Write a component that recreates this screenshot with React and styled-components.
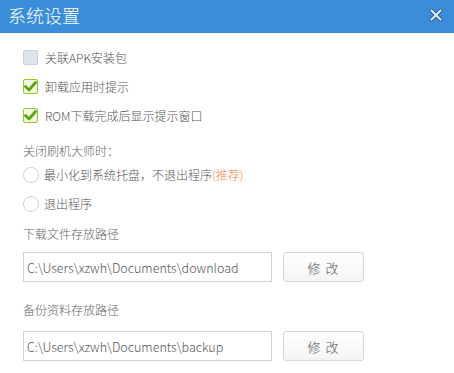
import React from "react";
import styled, { createGlobalStyle } from "styled-components";

const Global = createGlobalStyle`
  html, body { margin: 0; padding: 0; background: #fff; }
  body { font-family: "Noto Sans CJK SC", "Noto Sans", sans-serif; }
`;

const Window = styled.div`
  width: 454px;
  height: 373px;
  background: #fff;
  overflow: hidden;
`;

const TitleBar = styled.div`
  height: 33px;
  background: #3a8dd8;
  display: flex;
  align-items: center;
  justify-content: space-between;
  padding: 0 10px 0 8px;
  box-sizing: border-box;
`;

const Title = styled.div`
  color: #fff;
  font-size: 18px;
  font-weight: 300;
  line-height: 20px;
  margin-top: -3px;
`;

const Close = styled.div`
  width: 16px;
  height: 14px;
  align-self: flex-start;
  margin-top: 3px;
`;

const Body = styled.div`
  padding: 0 0 0 23px;
  display: flex;
  flex-direction: column;
  font-size: 12px;
  font-weight: 300;
`;

const CheckRow = styled.label`
  height: 29px;
  display: flex;
  align-items: center;
  gap: 7px;
  color: #555;
  margin-top: ${(p) => p.$mt || 0}px;
`;

const Box = styled.span`
  width: 13px;
  height: 13px;
  border: 1px solid ${(p) => (p.$checked ? "#93c92a" : "#c9d0d8")};
  background: ${(p) => (p.$checked ? "#f1f7e2" : "#dfe5ec")};
  border-radius: 2px;
  display: flex;
  align-items: center;
  justify-content: center;
`;

const Label = styled.div`
  height: 18px;
  line-height: 18px;
  color: #666;
  margin-top: ${(p) => p.$mt}px;
`;

const RadioRow = styled.label`
  height: 29px;
  display: flex;
  align-items: center;
  gap: 5px;
  color: #555;
`;

const Circle = styled.span`
  width: 14px;
  height: 14px;
  border: 1px solid #ccd3da;
  border-radius: 50%;
  background: #fff;
`;

const Hint = styled.span`
  color: #f08a4b;
`;

const PathRow = styled.div`
  display: flex;
  align-items: center;
  gap: 11px;
  margin-top: ${(p) => p.$mt}px;
`;

const PathInput = styled.div`
  width: 249px;
  height: 30px;
  box-sizing: border-box;
  border: 1px solid #cdd3da;
  display: flex;
  align-items: center;
  padding-left: 3px;
  font-size: 12.5px;
  font-weight: 300;
  color: #555;
  white-space: nowrap;
  overflow: hidden;
`;

const Button = styled.div`
  width: 81px;
  height: 30px;
  box-sizing: border-box;
  border: 1px solid #d6d6d6;
  border-radius: 3px;
  background: linear-gradient(#ffffff, #f4f4f4);
  display: flex;
  align-items: center;
  justify-content: center;
  font-size: 13px;
  letter-spacing: 1px;
  color: #555;
`;

const Check = () => (
  <svg width="13" height="11" viewBox="0 0 13 11">
    <path d="M1.5 5.5 L5 9 L11.5 1.5" fill="none" stroke="#5fa514" strokeWidth="2.8" strokeLinecap="round" strokeLinejoin="round" />
  </svg>
);

export default function App() {
  return (
    <Window>
      <Global />
      <TitleBar>
        <Title>系统设置</Title>
        <Close>
          <svg width="16" height="14" viewBox="0 0 16 14">
            <path d="M3.5 2.5 L12.5 11.5 M12.5 2.5 L3.5 11.5" stroke="#2a5c8c" strokeWidth="4" strokeLinecap="round" />
            <path d="M3.5 2.5 L12.5 11.5 M12.5 2.5 L3.5 11.5" stroke="#dbe9f7" strokeWidth="2.2" strokeLinecap="round" />
          </svg>
        </Close>
      </TitleBar>
      <Body>
        <CheckRow $mt={10}>
          <Box />
          关联APK安装包
        </CheckRow>
        <CheckRow>
          <Box $checked>
            <Check />
          </Box>
          卸载应用时提示
        </CheckRow>
        <CheckRow>
          <Box $checked>
            <Check />
          </Box>
          ROM下载完成后显示提示窗口
        </CheckRow>
        <Label $mt={12}>关闭刷机大师时：</Label>
        <RadioRow>
          <Circle />
          <span>
            最小化到系统托盘，不退出程序<Hint>(推荐)</Hint>
          </span>
        </RadioRow>
        <RadioRow>
          <Circle />
          退出程序
        </RadioRow>
        <Label $mt={7}>下载文件存放路径</Label>
        <PathRow $mt={9}>
          <PathInput>C:\Users\xzwh\Documents\download</PathInput>
          <Button>修 改</Button>
        </PathRow>
        <Label $mt={19}>备份资料存放路径</Label>
        <PathRow $mt={12}>
          <PathInput>C:\Users\xzwh\Documents\backup</PathInput>
          <Button>修 改</Button>
        </PathRow>
      </Body>
    </Window>
  );
}
